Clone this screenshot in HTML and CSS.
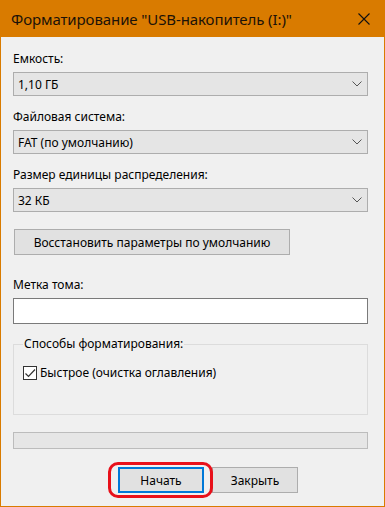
FILE: index.html
```html
<!DOCTYPE html>
<html lang="ru">
<head>
    <meta charset="UTF-8">
    <meta name="viewport" content="width=device-width, initial-scale=1.0">
    <title>Форматирование</title>
    <link rel="stylesheet" href="styles.css">
</head>
<body>
    <div class="window">
        <div class="title-bar">
            <span class="title">Форматирование "USB-накопитель (I:)"</span>
            <svg class="close" width="12" height="12" viewBox="0 0 12 12">
                <path d="M0.5 0.5 L11.5 11.5 M11.5 0.5 L0.5 11.5" stroke="#111" stroke-width="1.1" fill="none"/>
            </svg>
        </div>

        <div class="content">
            <div class="field">
                <div class="label">Емкость:</div>
                <div class="combo">
                    <span>1,10 ГБ</span>
                    <svg class="chevron" width="10" height="6" viewBox="0 0 10 6"><path d="M0.5 0.5 L5 5 L9.5 0.5" stroke="#555" fill="none"/></svg>
                </div>
            </div>

            <div class="field">
                <div class="label">Файловая система:</div>
                <div class="combo">
                    <span>FAT (по умолчанию)</span>
                    <svg class="chevron" width="10" height="6" viewBox="0 0 10 6"><path d="M0.5 0.5 L5 5 L9.5 0.5" stroke="#555" fill="none"/></svg>
                </div>
            </div>

            <div class="field">
                <div class="label">Размер единицы распределения:</div>
                <div class="combo">
                    <span>32 КБ</span>
                    <svg class="chevron" width="10" height="6" viewBox="0 0 10 6"><path d="M0.5 0.5 L5 5 L9.5 0.5" stroke="#555" fill="none"/></svg>
                </div>
            </div>

            <button class="btn restore">Восстановить параметры по умолчанию</button>

            <div class="field volume">
                <div class="label">Метка тома:</div>
                <div class="text-input"></div>
            </div>

            <fieldset class="options">
                <legend>Способы форматирования:</legend>
                <label class="check">
                    <span class="box">
                        <svg width="12" height="12" viewBox="0 0 12 12"><path d="M1.5 6.5 L4.5 9.5 L11 2.5" stroke="#333" stroke-width="1.2" fill="none"/></svg>
                    </span>
                    Быстрое (очистка оглавления)
                </label>
            </fieldset>

            <div class="progress"></div>

            <div class="actions">
                <div class="highlight-wrap">
                    <button class="btn primary">Начать</button>
                    <span class="highlight"></span>
                </div>
                <button class="btn">Закрыть</button>
            </div>
        </div>
    </div>
</body>
</html>
```

FILE: styles.css
```css
body {
    margin: 0;
    font-family: 'Noto Sans', 'Open Sans', sans-serif;
    font-size: 12px;
    color: #000;
    background: #f0f0f0;
}

.window {
    width: 385px;
    height: 507px;
    box-sizing: border-box;
    border: 1px solid #d97b00;
    border-top: none;
    background: #f0f0f0;
}

.title-bar {
    height: 37px;
    background: #d97b00;
    display: flex;
    align-items: center;
    justify-content: space-between;
    padding: 0 14px 0 10px;
}

.title {
    font-size: 15px;
    color: #1c1208;
    letter-spacing: -0.1px;
}

.close {
    display: block;
}

.content {
    padding: 14px 16px 0 12px;
}

.label {
    line-height: 16px;
    margin-bottom: 5px;
}

.field + .field {
    margin-top: 13px;
}

.combo {
    height: 24px;
    box-sizing: border-box;
    border: 1px solid #adadad;
    background: #e5e5e5;
    display: flex;
    align-items: center;
    justify-content: space-between;
    padding: 0 5px 0 4px;
}

.chevron {
    display: block;
}

.btn {
    font-family: inherit;
    font-size: 12px;
    color: #000;
    background: #e1e1e1;
    border: 1px solid #adadad;
    height: 26px;
    padding: 0;
    margin: 0;
}

.restore {
    display: block;
    width: 276px;
    margin: 17px 0 0 1px;
}

.volume {
    margin-top: 22px;
}

.text-input {
    height: 26px;
    box-sizing: border-box;
    border: 1px solid #7a7a7a;
    background: #fff;
}

.options {
    margin: 12px 0 0;
    padding: 12px 9px 0;
    height: 79px;
    box-sizing: border-box;
    border: 1px solid #dcdcdc;
}

.options legend {
    padding: 0 1px;
    line-height: 16px;
}

.check {
    display: flex;
    align-items: center;
    gap: 3px;
}

.box {
    width: 14px;
    height: 14px;
    box-sizing: border-box;
    border: 1px solid #333;
    background: #fff;
    display: flex;
    align-items: center;
    justify-content: center;
}

.box svg {
    display: block;
}

.progress {
    margin-top: 17px;
    height: 17px;
    box-sizing: border-box;
    border: 1px solid #bcbcbc;
    background: #e6e6e6;
}

.actions {
    display: flex;
    gap: 8px;
    margin-top: 18px;
    padding-left: 105px;
}

.actions .btn {
    width: 86px;
}

.btn.primary {
    border: 2px solid #0078d7;
}

.highlight-wrap {
    position: relative;
}

.highlight {
    position: absolute;
    left: -10px;
    top: -5px;
    width: 105px;
    height: 36px;
    box-sizing: border-box;
    border: 3px solid #e8101a;
    border-radius: 10px;
}
```
